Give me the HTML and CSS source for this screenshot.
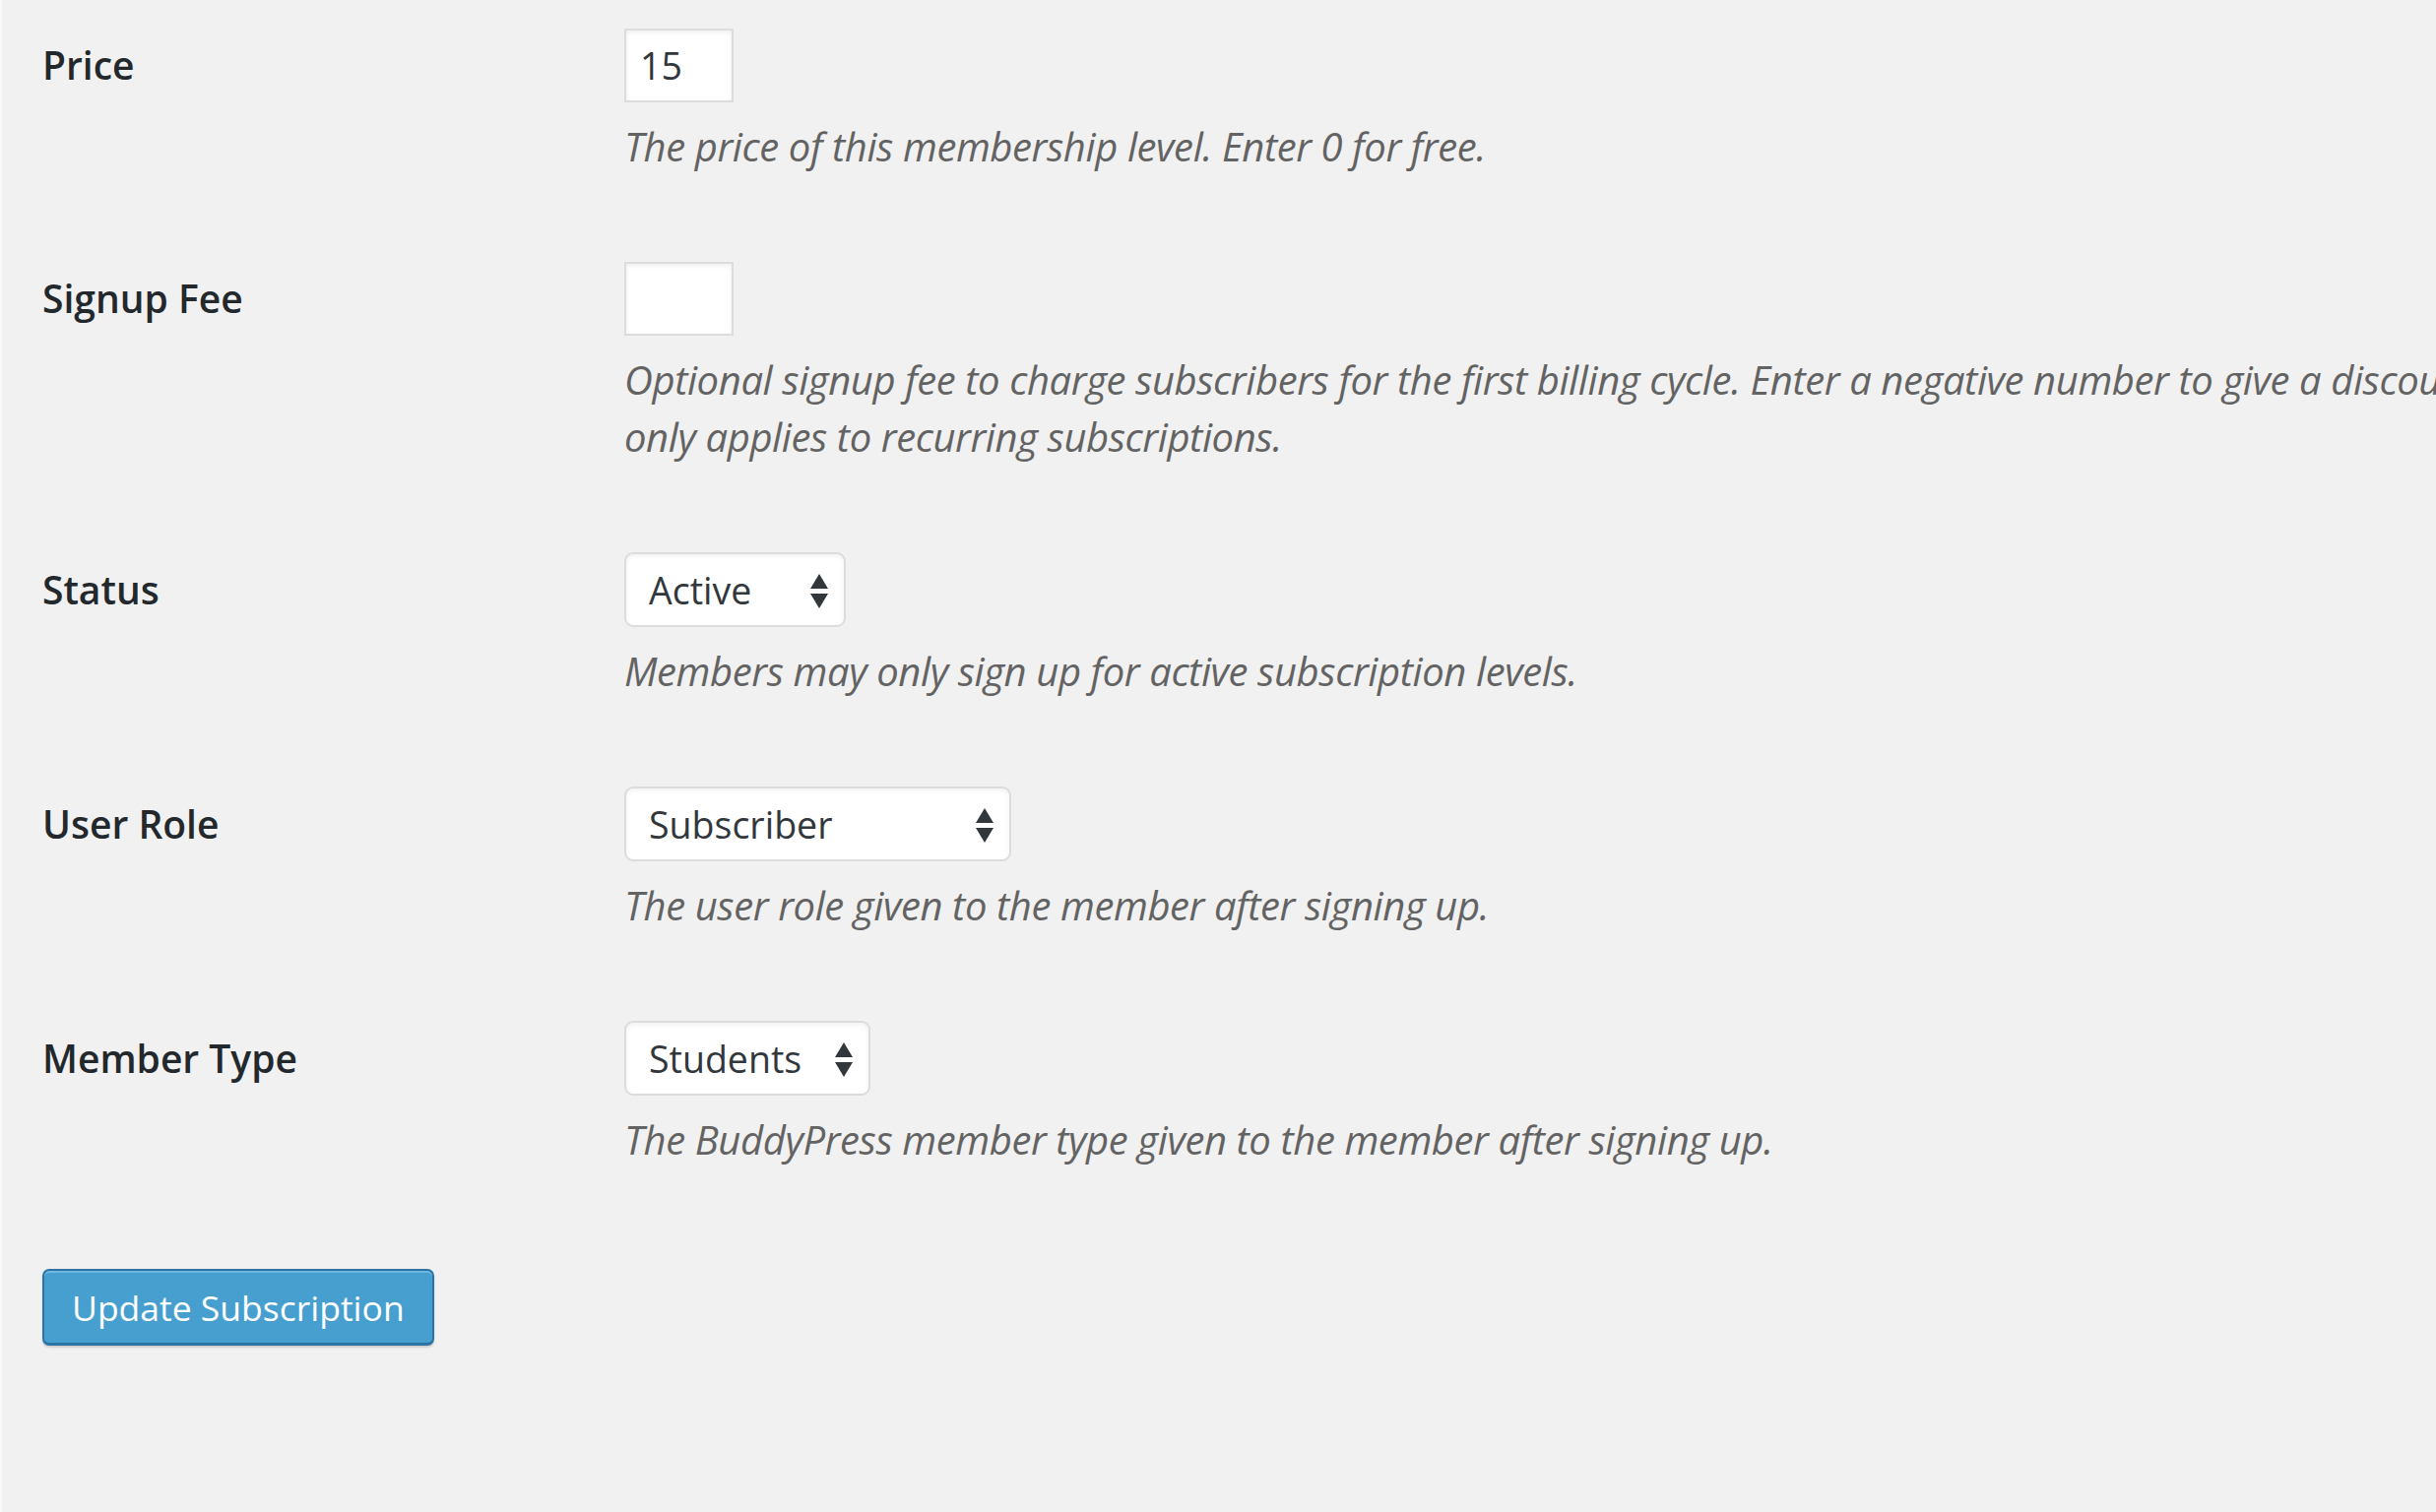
FILE: index.html
```html
<!DOCTYPE html>
<html lang="en">
<head>
<meta charset="utf-8">
<title>Edit Subscription Level</title>
<link rel="stylesheet" href="styles.css">
</head>
<body>
<form class="level-form">
  <div class="field-row">
    <label class="field-label" for="level-price">Price</label>
    <div class="field-body">
      <input id="level-price" class="text-input" type="text" value="15">
      <p class="description">The price of this membership level. Enter 0 for free.</p>
    </div>
  </div>

  <div class="field-row">
    <label class="field-label" for="level-fee">Signup Fee</label>
    <div class="field-body">
      <input id="level-fee" class="text-input" type="text" value="">
      <p class="description description--nowrap">Optional signup fee to charge subscribers for the first billing cycle. Enter a negative number to give a discount on the first payment. This<br>only applies to recurring subscriptions.</p>
    </div>
  </div>

  <div class="field-row">
    <label class="field-label" for="level-status">Status</label>
    <div class="field-body">
      <div class="select-wrap select-wrap--status">
        <select id="level-status" class="select-input">
          <option selected>Active</option>
          <option>Inactive</option>
        </select>
        <svg class="select-arrows" width="18" height="35" viewBox="0 0 18 35" aria-hidden="true">
          <polygon points="0,15 9,0 18,15"/>
          <polygon points="0,20 18,20 9,35"/>
        </svg>
      </div>
      <p class="description">Members may only sign up for active subscription levels.</p>
    </div>
  </div>

  <div class="field-row">
    <label class="field-label" for="level-role">User Role</label>
    <div class="field-body">
      <div class="select-wrap select-wrap--role">
        <select id="level-role" class="select-input">
          <option selected>Subscriber</option>
          <option>Contributor</option>
          <option>Author</option>
          <option>Editor</option>
          <option>Administrator</option>
        </select>
        <svg class="select-arrows" width="18" height="35" viewBox="0 0 18 35" aria-hidden="true">
          <polygon points="0,15 9,0 18,15"/>
          <polygon points="0,20 18,20 9,35"/>
        </svg>
      </div>
      <p class="description">The user role given to the member after signing up.</p>
    </div>
  </div>

  <div class="field-row">
    <label class="field-label" for="level-type">Member Type</label>
    <div class="field-body">
      <div class="select-wrap select-wrap--type">
        <select id="level-type" class="select-input">
          <option selected>Students</option>
          <option>Teachers</option>
        </select>
        <svg class="select-arrows" width="18" height="35" viewBox="0 0 18 35" aria-hidden="true">
          <polygon points="0,15 9,0 18,15"/>
          <polygon points="0,20 18,20 9,35"/>
        </svg>
      </div>
      <p class="description">The BuddyPress member type given to the member after signing up.</p>
    </div>
  </div>

  <div class="submit-row">
    <button type="submit" class="button-primary">Update Subscription</button>
  </div>
</form>
</body>
</html>
```

FILE: styles.css
```css
html, body {
  margin: 0;
  padding: 0;
}

body {
  background: #f1f1f1;
  border-left: 2px solid #f9f9f9;
  overflow: hidden;
  font-family: "Open Sans", "Noto Sans", "Liberation Sans", sans-serif;
  font-size: 37px;
  color: #32373c;
  min-height: 1536px;
  box-sizing: border-box;
}

.level-form {
  display: flex;
  flex-direction: column;
  gap: 88px;
  padding: 29px 0 0 41px;
}

.field-row {
  display: grid;
  grid-template-columns: 591px 1fr;
  align-items: baseline;
}

.field-label {
  font-size: 39px;
  font-weight: 600;
  color: #23282d;
  line-height: 1.3;
}

.field-body {
  min-width: 0;
}

.text-input {
  box-sizing: border-box;
  width: 111px;
  height: 75px;
  margin: 0;
  padding: 0 14px;
  border: 2px solid #dcdcdc;
  border-radius: 0;
  background: #ffffff;
  box-shadow: inset 0 2px 5px rgba(0, 0, 0, 0.07);
  font: inherit;
  font-size: 37.5px;
  color: #32373c;
  outline: none;
}

.select-wrap {
  position: relative;
  display: inline-block;
}

.select-wrap--status { width: 225px; }
.select-wrap--role { width: 393px; }
.select-wrap--type { width: 250px; }

.select-input {
  -webkit-appearance: none;
  appearance: none;
  box-sizing: border-box;
  width: 100%;
  height: 76px;
  margin: 0;
  padding: 0 50px 0 23px;
  border: 2px solid #dcdcdc;
  border-radius: 9px;
  background: #ffffff;
  box-shadow: inset 0 2px 5px rgba(0, 0, 0, 0.06);
  font: inherit;
  font-size: 37.5px;
  color: #32373c;
  outline: none;
}

.select-arrows {
  position: absolute;
  top: 22px;
  right: 18px;
  fill: #32373c;
  pointer-events: none;
}

.description {
  margin: 16px 0 0;
  font-size: 40px;
  font-style: italic;
  letter-spacing: -0.4px;
  line-height: 58px;
  color: #636363;
}

.description--nowrap {
  white-space: nowrap;
}

.submit-row {
  margin-top: 14px;
}

.button-primary {
  box-sizing: border-box;
  height: 78px;
  margin: 0;
  padding: 0 28px;
  border: 2px solid #2d74a5;
  border-bottom-width: 3px;
  border-radius: 7px;
  background: #469fcf;
  box-shadow: inset 0 2px 0 rgba(140, 200, 235, 0.6), 0 2px 2px rgba(0, 0, 0, 0.15);
  font: inherit;
  font-size: 35.5px;
  color: #ffffff;
  cursor: pointer;
}
```
